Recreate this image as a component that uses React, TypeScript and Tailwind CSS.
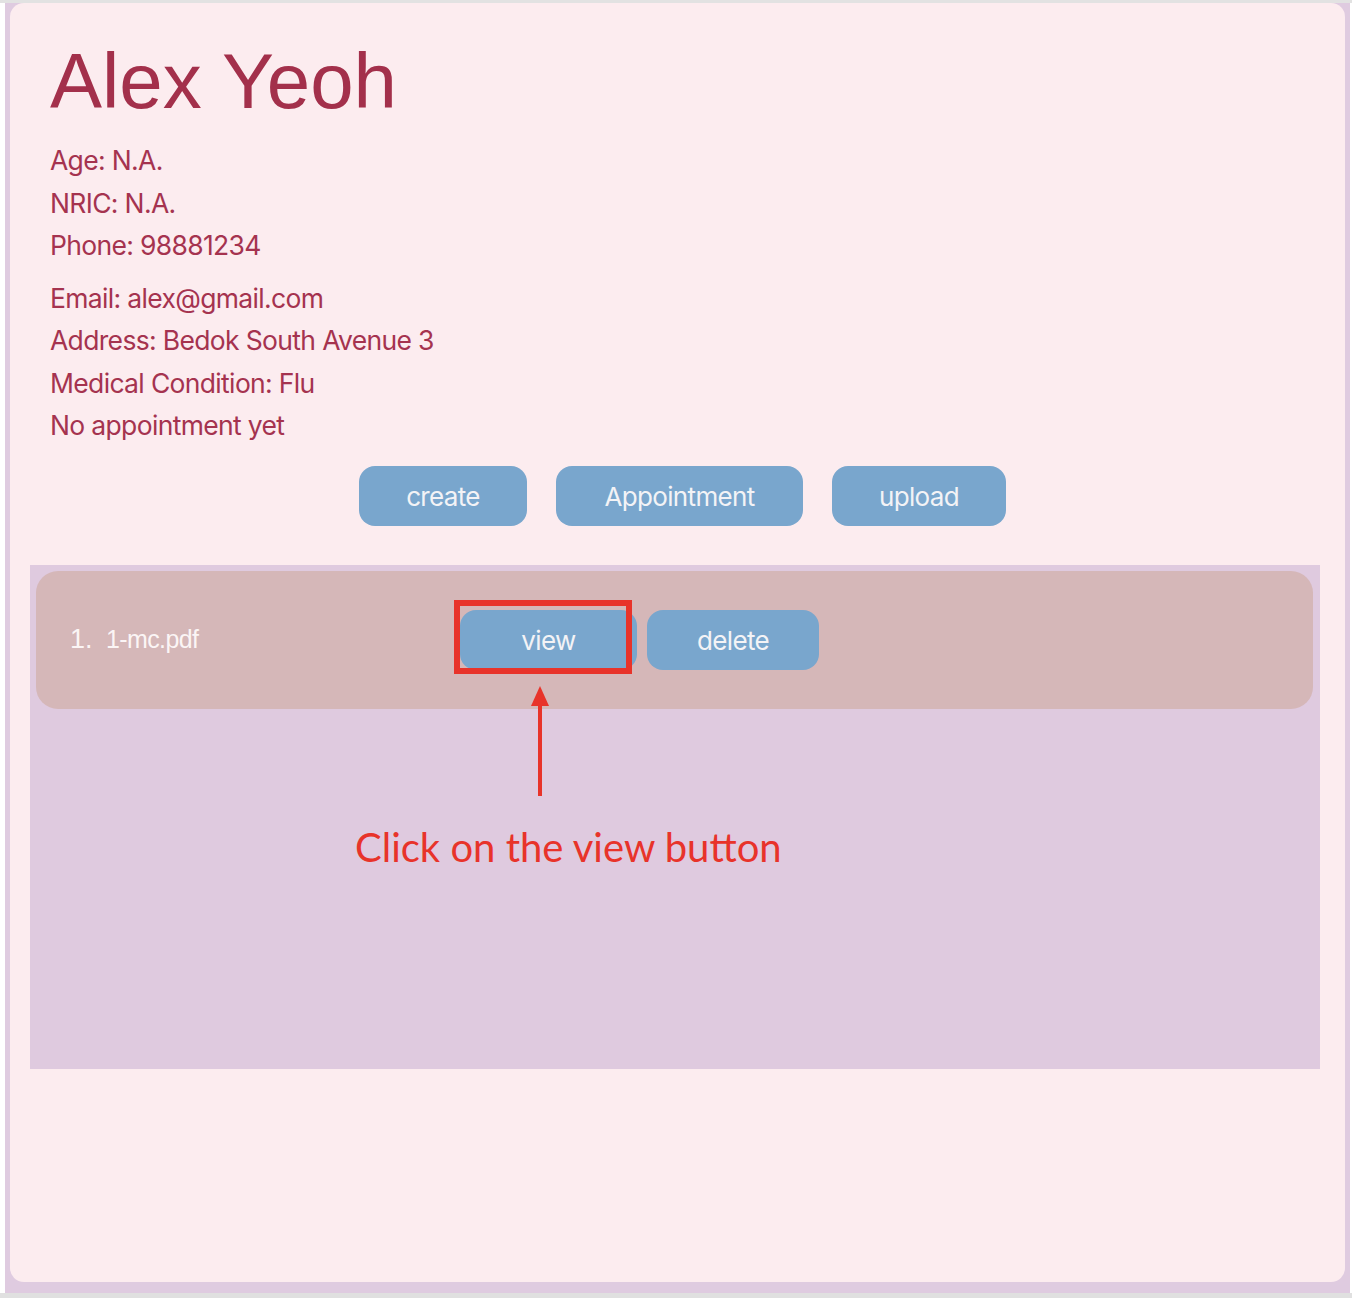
import { useState } from "react";

const details = ["Age: N.A.", "NRIC: N.A.", "Phone: 98881234"];
const moreDetails = [
	"Email: alex@gmail.com",
	"Address: Bedok South Avenue 3",
	"Medical Condition: Flu",
	"No appointment yet",
];

const btn =
	"h-[60px] rounded-[16px] bg-[#79a6cd] text-[#f3f3f6] text-[26px] tracking-tight flex items-center justify-center pt-[2px]";

const App = () => {
	const [files] = useState([{ name: "1-mc.pdf" }]);

	return (
		<div className="w-[1352px] h-[1298px] bg-white flex flex-col">
			<div className="h-[3px] bg-[#e2e2e2]" />
			<div className="ml-[5px] w-[1345px] h-[1290px] bg-[#dfcbe0] px-[5px] pb-[11px]">
				<div className="h-full bg-[#fcecef] rounded-[14px] pt-[39px] relative">
					<div className="pl-[40px] text-[#a3304b]">
						<h1 className="text-[78px] leading-none font-['Liberation_Sans',sans-serif]">
							Alex Yeoh
						</h1>
						<div className="mt-[19px] text-[26.5px] tracking-tight leading-[42.5px] font-['Inter',sans-serif] text-[#a5334f]">
							{details.map((d) => (
								<div key={d}>{d}</div>
							))}
							<div className="mt-[10px]">
								{moreDetails.map((d) => (
									<div key={d}>{d}</div>
								))}
							</div>
						</div>
					</div>

					<div className="mt-[19px] pl-[40px] pr-[30px] flex justify-center gap-[29px] font-['Inter',sans-serif]">
						<button className={`${btn} w-[168px]`}>create</button>
						<button className={`${btn} w-[247px]`}>Appointment</button>
						<button className={`${btn} w-[174px]`}>upload</button>
					</div>

					<div className="mt-[39px] ml-[20px] w-[1290px] h-[504px] bg-[#dfcadf] pt-[6px] pl-[6px] relative">
						{files.map((file, index) => (
							<div
								key={file.name}
								className="w-[1277px] h-[138px] rounded-[22px] bg-[#d5b7b8] flex items-center pl-[34px]">
								<div className="w-[390px] flex items-baseline text-[#fbf5f5] font-['Liberation_Sans',sans-serif]">
									<span className="text-[27px] w-[36px]">{index + 1}.</span>
									<span className="text-[25px] tracking-tight">{file.name}</span>
								</div>
								<div className="flex gap-[10px] font-['Inter',sans-serif]">
									<div className="relative">
										<button className={`${btn} w-[177px]`}>view</button>
										<div className="absolute left-[-6px] top-[-10px] w-[178px] h-[74px] border-[6px] border-[#e8332a]" />
									</div>
									<button className={`${btn} w-[172px]`}>delete</button>
								</div>
							</div>
						))}

						{/* annotation */}
						<div className="absolute left-[500px] top-[121px] flex flex-col items-center">
							<svg width="20" height="110" viewBox="0 0 20 110">
								<polygon points="10,0 19,20 1,20" fill="#e8332a" />
								<rect x="8" y="18" width="4" height="92" fill="#e8332a" />
							</svg>
						</div>
						<div className="absolute left-[325px] top-[262px] text-[40px] leading-none text-[#e8332a] font-['Lato',sans-serif]">
							Click on the view button
						</div>
					</div>
				</div>
			</div>
			<div className="h-[5px] bg-[#e0e0e0]" />
		</div>
	);
};

export default App;
